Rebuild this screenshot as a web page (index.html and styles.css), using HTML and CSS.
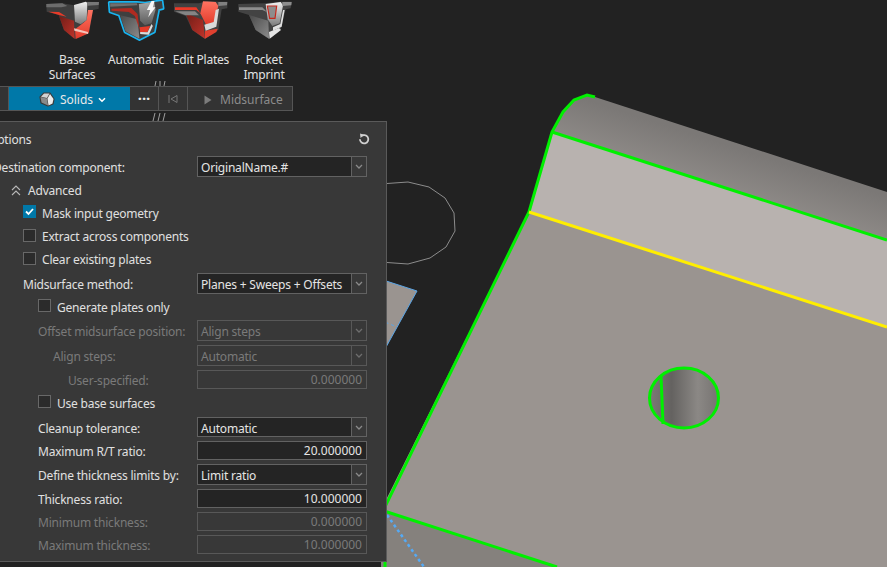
FILE: index.html
```html
<!DOCTYPE html>
<html lang="en">
<head>
<meta charset="utf-8">
<title>Midsurface</title>
<link rel="stylesheet" href="styles.css">
</head>
<body>
<div class="app">
  <svg class="scene" viewBox="0 0 887 567" width="887" height="567" aria-hidden="true">
    <defs>
      <linearGradient id="roll" gradientUnits="userSpaceOnUse" x1="640" y1="172" x2="656" y2="122">
        <stop offset="0" stop-color="#918d8a"/>
        <stop offset="1" stop-color="#7b7876"/>
      </linearGradient>
      <linearGradient id="bore" x1="0" y1="0" x2="1" y2="0">
        <stop offset="0" stop-color="#7d7a78"/>
        <stop offset="0.32" stop-color="#646260"/>
        <stop offset="0.7" stop-color="#8b8885"/>
        <stop offset="1" stop-color="#767371"/>
      </linearGradient>
      <linearGradient id="metal" x1="0" y1="0" x2="0" y2="1">
        <stop offset="0" stop-color="#f0f0f0"/>
        <stop offset="1" stop-color="#7a7a7a"/>
      </linearGradient>
      <linearGradient id="metal-dark" x1="0" y1="0" x2="0" y2="1">
        <stop offset="0" stop-color="#a8a8a8"/>
        <stop offset="1" stop-color="#5a5a5a"/>
      </linearGradient>
      <linearGradient id="red-dark" x1="0" y1="0" x2="1" y2="1">
        <stop offset="0" stop-color="#6f1d17"/>
        <stop offset="1" stop-color="#c0332a"/>
      </linearGradient>
      <linearGradient id="red-bright" x1="0" y1="0" x2="0" y2="1">
        <stop offset="0" stop-color="#ff7361"/>
        <stop offset="1" stop-color="#e23a2a"/>
      </linearGradient>
      <linearGradient id="body-gray" x1="0" y1="0" x2="1" y2="1">
        <stop offset="0" stop-color="#4a4a4a"/>
        <stop offset="1" stop-color="#8c8c8c"/>
      </linearGradient>
    </defs>
    <polygon class="face-main" points="529,212 887,327 887,567 557,567 381,510"/>
    <polygon class="face-low" points="381,510 557,567 381,567"/>
    <polygon class="face-band" points="552,132 887,240 887,327 529,212"/>
    <polygon fill="url(#roll)" points="552,132 563,112 574,100 587,95 595,97 887,192 887,240"/>
    <polyline class="wire" points="380,184 408,182 429,187 445,198 454,213 455,231 446,247 430,258 408,264 380,262"/>
    <polygon class="tri" points="380,279 417,291 380,358"/>
    <line class="dash-thin" x1="380" y1="320" x2="397" y2="327"/>
    <polyline class="edge" points="595,97 587,95 574,100 563,112 552,132 529,212 381,515"/>
    <line class="edge" x1="552" y1="132" x2="887" y2="240"/>
    <line class="edge" x1="381" y1="510" x2="557" y2="567"/>
    <line class="edge-yellow" x1="529" y1="212" x2="887" y2="327"/>
    <line class="dash-blue" x1="387" y1="515" x2="424" y2="567"/>
    <ellipse cx="684" cy="398" rx="34.500" ry="30" fill="url(#bore)"/>
    <ellipse class="edge" cx="684" cy="398" rx="34.500" ry="30"/>
    <line class="edge" x1="661" y1="376" x2="663" y2="424"/>
    <line class="edge" x1="385" y1="562" x2="385" y2="567"/>
    <path class="ticks" d="M155 86 156 81M160 86 160 81M164 86 165 81M153 121 155 113M158 121 160 113M163 121 165 113"/>
  </svg>

  <div class="ribbon">
    <div class="tool tool-a">
      <svg class="tool-icon" viewBox="40 0 171 126" aria-hidden="true">
        <polygon fill="#3e3e3e" points="47,12 95,10 130,16 165,5 205,6 204,26 187,30 175,100 135,117 100,90 84,45 48,35"/>
        <polygon fill="#6c6c6c" points="47,12 95,10 110,18 92,22 47,22"/>
        <polygon fill="url(#red-dark)" points="85,48 130,62 132,117 100,90"/>
        <polygon fill="url(#red-bright)" points="133,88 135,117 174,100 187,30 172,30 168,60 150,75"/>
        <polygon fill="#f4c4ba" points="130,85 172,96 172,102 131,92"/>
        <polygon fill="url(#metal)" points="130,15 165,5 170,8 168,60 150,73 133,65"/>
        <polygon fill="#e83a28" points="53,35 85,36 108,50 85,45"/>
        <polygon fill="#777777" points="170,6 205,6 204,15 170,17"/>
      </svg>
      <div class="tool-label">Base<br>Surfaces</div>
    </div>
    <div class="tool tool-b">
      <svg class="tool-icon" viewBox="233.500 0 171 126" aria-hidden="true">
        <polygon class="glow" points="238,8 320,8 345,10 395,3 398,25 385,28 372,95 328,118 285,95 268,45 240,35"/>
        <polygon fill="#3f3f3f" points="238,8 320,8 345,10 395,3 398,25 385,28 372,95 328,118 285,95 268,45 240,35"/>
        <polygon fill="url(#body-gray)" points="270,46 322,58 328,116 286,94"/>
        <polygon fill="url(#metal-dark)" points="326,12 372,5 376,30 364,70 344,76 330,62"/>
        <polygon fill="#b02b21" points="244,26 304,24 322,42 328,88 314,48 296,36 244,32"/>
        <polygon fill="#e63b29" points="328,82 360,78 352,96 330,97"/>
        <polygon fill="#dcdcdc" points="330,96 352,97 364,72 368,78 356,104 330,102"/>
        <polygon fill="#f6f6f6" points="364,3 373,3 368,22 376,22 354,52 360,30 350,30"/>
        <polygon fill="#6f6f6f" points="240,10 320,10 322,16 240,20"/>
      </svg>
      <div class="tool-label">Automatic</div>
    </div>
    <div class="tool tool-c">
      <svg class="tool-icon" viewBox="22 0 171 126" aria-hidden="true">
        <polygon fill="#414141" points="25,10 100,10 125,3 160,5 185,5 185,25 168,28 158,90 118,117 80,90 60,48 25,35"/>
        <polygon fill="url(#red-dark)" points="60,40 112,60 118,116 80,90"/>
        <polygon fill="url(#red-bright)" points="112,4 150,6 158,18 146,66 122,76 114,60 104,40"/>
        <polygon fill="#e0402f" points="118,92 146,88 156,86 152,96 118,116"/>
        <polygon fill="#d9d9d9" points="116,74 144,66 150,30 160,26 152,80 120,92"/>
        <polygon fill="#ea3a28" points="28,22 92,22 104,40 92,30 28,30"/>
        <polygon fill="#858585" points="28,34 88,34 100,46 60,46"/>
        <polygon fill="#808080" points="158,6 185,6 184,16 158,18"/>
      </svg>
      <div class="tool-label">Edit Plates</div>
    </div>
    <div class="tool tool-d">
      <svg class="tool-icon" viewBox="211 0 171 126" aria-hidden="true">
        <polygon fill="#434343" points="218,12 300,10 345,5 378,5 375,25 360,28 345,90 310,117 270,90 250,45 218,35"/>
        <polygon fill="url(#body-gray)" points="250,45 308,62 310,116 270,90"/>
        <polygon fill="url(#metal)" points="300,12 345,6 352,16 342,70 320,78 306,58"/>
        <polygon fill="#8d8d8d" points="305,18 333,18 328,55 312,55" stroke="#c6281c" stroke-width="3.500"/>
        <polygon fill="#e5e5e5" points="310,96 340,84 346,90 312,116"/>
        <polygon fill="#e0e0e0" points="322,82 344,72 352,30 357,30 348,80 322,92"/>
        <polygon fill="#8d8d8d" points="220,22 290,22 304,36 290,30 220,30"/>
        <polygon fill="#8d8d8d" points="350,6 378,6 377,16 350,18"/>
      </svg>
      <div class="tool-label">Pocket<br>Imprint</div>
    </div>
  </div>

  <div class="toolbar">
    <div class="tb-stub"></div>
    <div class="tb-solids">
      <svg class="solid-icon" viewBox="0 0 16 15" aria-hidden="true">
        <polygon fill="#3a3a3a" stroke="#3a3a3a" stroke-width="1.200" stroke-linejoin="round" points="1,5 5,1 11,1 15,7 14,12 9,14 2,11"/>
        <polygon fill="#8a8a8a" points="1.500,5 8,6.500 9,13.500 2.500,10.500"/>
        <polygon fill="#d2d2d2" points="2,4.800 5,1.500 10.500,1.500 8,6"/>
        <polygon fill="#ececec" points="11,2 14.500,7 13.500,11.500 9.500,13.500 8.500,6.500"/>
      </svg>
      <span>Solids</span>
      <svg class="chev-white" viewBox="0 0 8 6" aria-hidden="true"><path d="M1 1.200 4 4.200 7 1.200"/></svg>
    </div>
    <div class="tb-more">···</div>
    <div class="tb-back">
      <svg class="back-icon" viewBox="0 0 10 10" aria-hidden="true"><path d="M1 1V9M9 1.500 3 5 9 8.500Z"/></svg>
    </div>
    <div class="tb-run">
      <svg class="play-icon" viewBox="0 0 8 10" aria-hidden="true"><polygon points="0.500,0.500 7.500,5 0.500,9.500"/></svg>
      <span>Midsurface</span>
    </div>
  </div>

  <section class="panel">
    <div class="panel-head">
      <span class="panel-title">Options</span>
      <svg class="reset" viewBox="0 0 12 12" aria-hidden="true"><path d="M3.200 3.200A4.200 4.200 0 1 1 1.900 6.300"/><polygon points="2,0.600 6,1.800 2.600,5"/></svg>
    </div>
    <div class="rows">
      <div class="row h21"><span class="label i0">Destination component:</span><div class="combo"><span class="value">OriginalName.#</span><span class="arrow"><svg class="chev" viewBox="0 0 8 5"><path d="M1 1 4 4 7 1"/></svg></span></div></div>
      <div class="row h18"><svg class="dbl" viewBox="0 0 10 11" aria-hidden="true"><path d="M1 5 5 1 9 5M1 10 5 6 9 10"/></svg><span class="label adv">Advanced</span></div>
      <div class="row h20 chk1"><span class="box on"><svg viewBox="0 0 13 13"><path d="M3 6.500 5.500 9 10 4"/></svg></span><span class="label">Mask input geometry</span></div>
      <div class="row h19 chk1"><span class="box"></span><span class="label">Extract across components</span></div>
      <div class="row h19 chk1"><span class="box"></span><span class="label">Clear existing plates</span></div>
      <div class="row h21"><span class="label i1">Midsurface method:</span><div class="combo"><span class="value">Planes + Sweeps + Offsets</span><span class="arrow"><svg class="chev" viewBox="0 0 8 5"><path d="M1 1 4 4 7 1"/></svg></span></div></div>
      <div class="row h18 chk2"><span class="box"></span><span class="label">Generate plates only</span></div>
      <div class="row h21 off"><span class="label i2">Offset midsurface position:</span><div class="combo"><span class="value">Align steps</span><span class="arrow"><svg class="chev" viewBox="0 0 8 5"><path d="M1 1 4 4 7 1"/></svg></span></div></div>
      <div class="row h21 off"><span class="label i3">Align steps:</span><div class="combo"><span class="value">Automatic</span><span class="arrow"><svg class="chev" viewBox="0 0 8 5"><path d="M1 1 4 4 7 1"/></svg></span></div></div>
      <div class="row h19 off"><span class="label i4">User-specified:</span><div class="num">0.000000</div></div>
      <div class="row h20 chk2"><span class="box"></span><span class="label">Use base surfaces</span></div>
      <div class="row h20"><span class="label i2">Cleanup tolerance:</span><div class="combo"><span class="value">Automatic</span><span class="arrow"><svg class="chev" viewBox="0 0 8 5"><path d="M1 1 4 4 7 1"/></svg></span></div></div>
      <div class="row h19"><span class="label i2">Maximum R/T ratio:</span><div class="num">20.000000</div></div>
      <div class="row h21"><span class="label i2">Define thickness limits by:</span><div class="combo"><span class="value">Limit ratio</span><span class="arrow"><svg class="chev" viewBox="0 0 8 5"><path d="M1 1 4 4 7 1"/></svg></span></div></div>
      <div class="row h19"><span class="label i2">Thickness ratio:</span><div class="num">10.000000</div></div>
      <div class="row h19 off"><span class="label i2">Minimum thickness:</span><div class="num">0.000000</div></div>
      <div class="row h19 off"><span class="label i2">Maximum thickness:</span><div class="num">10.000000</div></div>
    </div>
  </section>
</div>
</body>
</html>
```
FILE: styles.css
```css
* { box-sizing: border-box; }
html, body { margin: 0; padding: 0; background: #222222; }
.app {
  position: relative;
  width: 887px;
  height: 567px;
  overflow: hidden;
  background: #222222;
  color: #e0e0e0;
  font: 12px/15px "Noto Sans", "Open Sans", sans-serif;
  letter-spacing: -0.2px;
}

/* 3D viewport */
.scene { position: absolute; inset: 0; display: block; }
.face-main { fill: #9a9490; }
.face-low { fill: #85817d; }
.face-band { fill: #b8b2af; }
.wire { fill: none; stroke: #8c8c8c; stroke-width: 1; }
.tri { fill: #9a9490; stroke: #5aa5e6; stroke-width: 1; }
.dash-thin { stroke: #5aa5e6; stroke-width: 1; stroke-dasharray: 3 3; }
.edge { fill: none; stroke: #00f000; stroke-width: 3; }
.edge-yellow { stroke: #ffee00; stroke-width: 3; }
.dash-blue { stroke: #55aaf5; stroke-width: 2.500; stroke-dasharray: 3 3; }
.ticks { fill: none; stroke: #a0a0a0; stroke-width: 1; }

/* Ribbon */
.ribbon {
  position: relative;
  display: flex;
  height: 86px;
  padding-left: 40px;
}
.tool { display: flex; flex-direction: column; align-items: center; }
.tool-a { width: 64px; }
.tool-b { width: 64px; }
.tool-c { width: 66px; }
.tool-d { width: 60px; }
.tool-icon { display: block; width: 57px; height: 42px; margin-bottom: 10px; flex: none; overflow: visible; }
.glow { fill: #19b4f0; stroke: #19b4f0; stroke-width: 10; stroke-linejoin: round; filter: blur(1px); }
.tool-label { text-align: center; white-space: nowrap; color: #e2e2e2; }

/* Tool strip */
.toolbar {
  position: relative;
  display: flex;
  width: 293px;
  height: 25px;
  background: #333333;
  border: 1px solid #555555;
  border-left: 0;
  margin-bottom: 10px;
  letter-spacing: 0;
}
.tb-stub { width: 9px; border-right: 1px solid #555555; }
.tb-solids {
  width: 121px;
  background: #0078a8;
  color: #e8e8e8;
  display: flex;
  align-items: center;
  justify-content: center;
  gap: 5px;
  padding: 2px 0 0 6px;
}
.solid-icon { width: 16px; height: 15px; }
.chev-white { width: 8px; height: 6px; fill: none; stroke: #ffffff; stroke-width: 1.600; }
.tb-more {
  width: 29px;
  border-right: 1px solid #555555;
  text-align: center;
  font-weight: 700;
  font-size: 15px;
  line-height: 22px;
  color: #e8e8e8;
}
.tb-back {
  width: 29px;
  border-right: 1px solid #555555;
  display: flex;
  align-items: center;
  justify-content: center;
  padding: 1px 0 0;
}
.back-icon { width: 10px; height: 10px; fill: none; stroke: #777777; stroke-width: 1; }
.tb-run {
  flex: 1;
  display: flex;
  align-items: center;
  gap: 8px;
  padding: 2px 0 0 16px;
  color: #8c8c8c;
}
.play-icon { width: 8px; height: 10px; fill: #7c7c7c; }

/* Options panel */
.panel {
  position: relative;
  width: 418px;
  margin-left: -31px;
  background: #383838;
  border: 1px solid #5a5a5a;
  padding-bottom: 7px;
}
.panel-head {
  display: flex;
  align-items: center;
  justify-content: space-between;
  height: 34px;
  padding: 0 16px 0 18px;
}
.reset { width: 12px; height: 12px; fill: #d0d0d0; }
.reset path { fill: none; stroke: #d0d0d0; stroke-width: 1.800; }
.rows { display: flex; flex-direction: column; gap: 4px; }
.row { display: flex; align-items: center; padding-right: 19px; }
.h18 { height: 18px; }
.h19 { height: 19px; }
.h20 { height: 20px; }
.h21 { height: 21px; }
.label { flex: 1; white-space: nowrap; }
.chk1 { padding-left: 53px; }
.chk2 { padding-left: 68px; }
.label.i0, .label.i1, .label.i2, .label.i3, .label.i4 { padding-top: 2px; }
.label.i0 { padding-left: 23px; }
.label.i1 { padding-left: 53px; }
.label.i2 { padding-left: 68px; }
.label.i3 { padding-left: 83px; }
.label.i4 { padding-left: 98px; }
.dbl { flex: none; width: 10px; height: 11px; margin-left: 41px; margin-right: 7px; fill: none; stroke: #b8b8b8; stroke-width: 1.100; }
.box {
  flex: none;
  width: 13px;
  height: 13px;
  margin: -3px 6px 0 0;
  background: #2b2b2b;
  border: 1px solid #686868;
}
.box.on { background: #0078a8; border-color: #0078a8; }
.box svg { display: block; width: 13px; height: 13px; margin: -1px; fill: none; stroke: #ffffff; stroke-width: 1.800; }
.combo { flex: none; display: flex; width: 170px; height: 100%; }
.value {
  flex: 1;
  background: #242424;
  border: 1px solid #626262;
  padding-left: 3px;
  line-height: 21px;
  color: #e4e4e4;
  white-space: nowrap;
  overflow: hidden;
}
.arrow {
  flex: none;
  width: 15px;
  border: 1px solid #626262;
  border-left: 0;
  display: flex;
  align-items: center;
  justify-content: center;
}
.chev { width: 8px; height: 5px; fill: none; stroke: #8a8a8a; stroke-width: 1.300; }
.num {
  flex: none;
  width: 170px;
  height: 100%;
  background: #242424;
  border: 1px solid #626262;
  padding-right: 4px;
  text-align: right;
  line-height: 18px;
  color: #e4e4e4;
  letter-spacing: 0;
}
.off .label { color: #7a7a7a; }
.off .value, .off .num { background: transparent; color: #7a7a7a; border-color: #585858; }
.off .arrow { border-color: #585858; }
.off .chev { stroke: #6e6e6e; }
```
